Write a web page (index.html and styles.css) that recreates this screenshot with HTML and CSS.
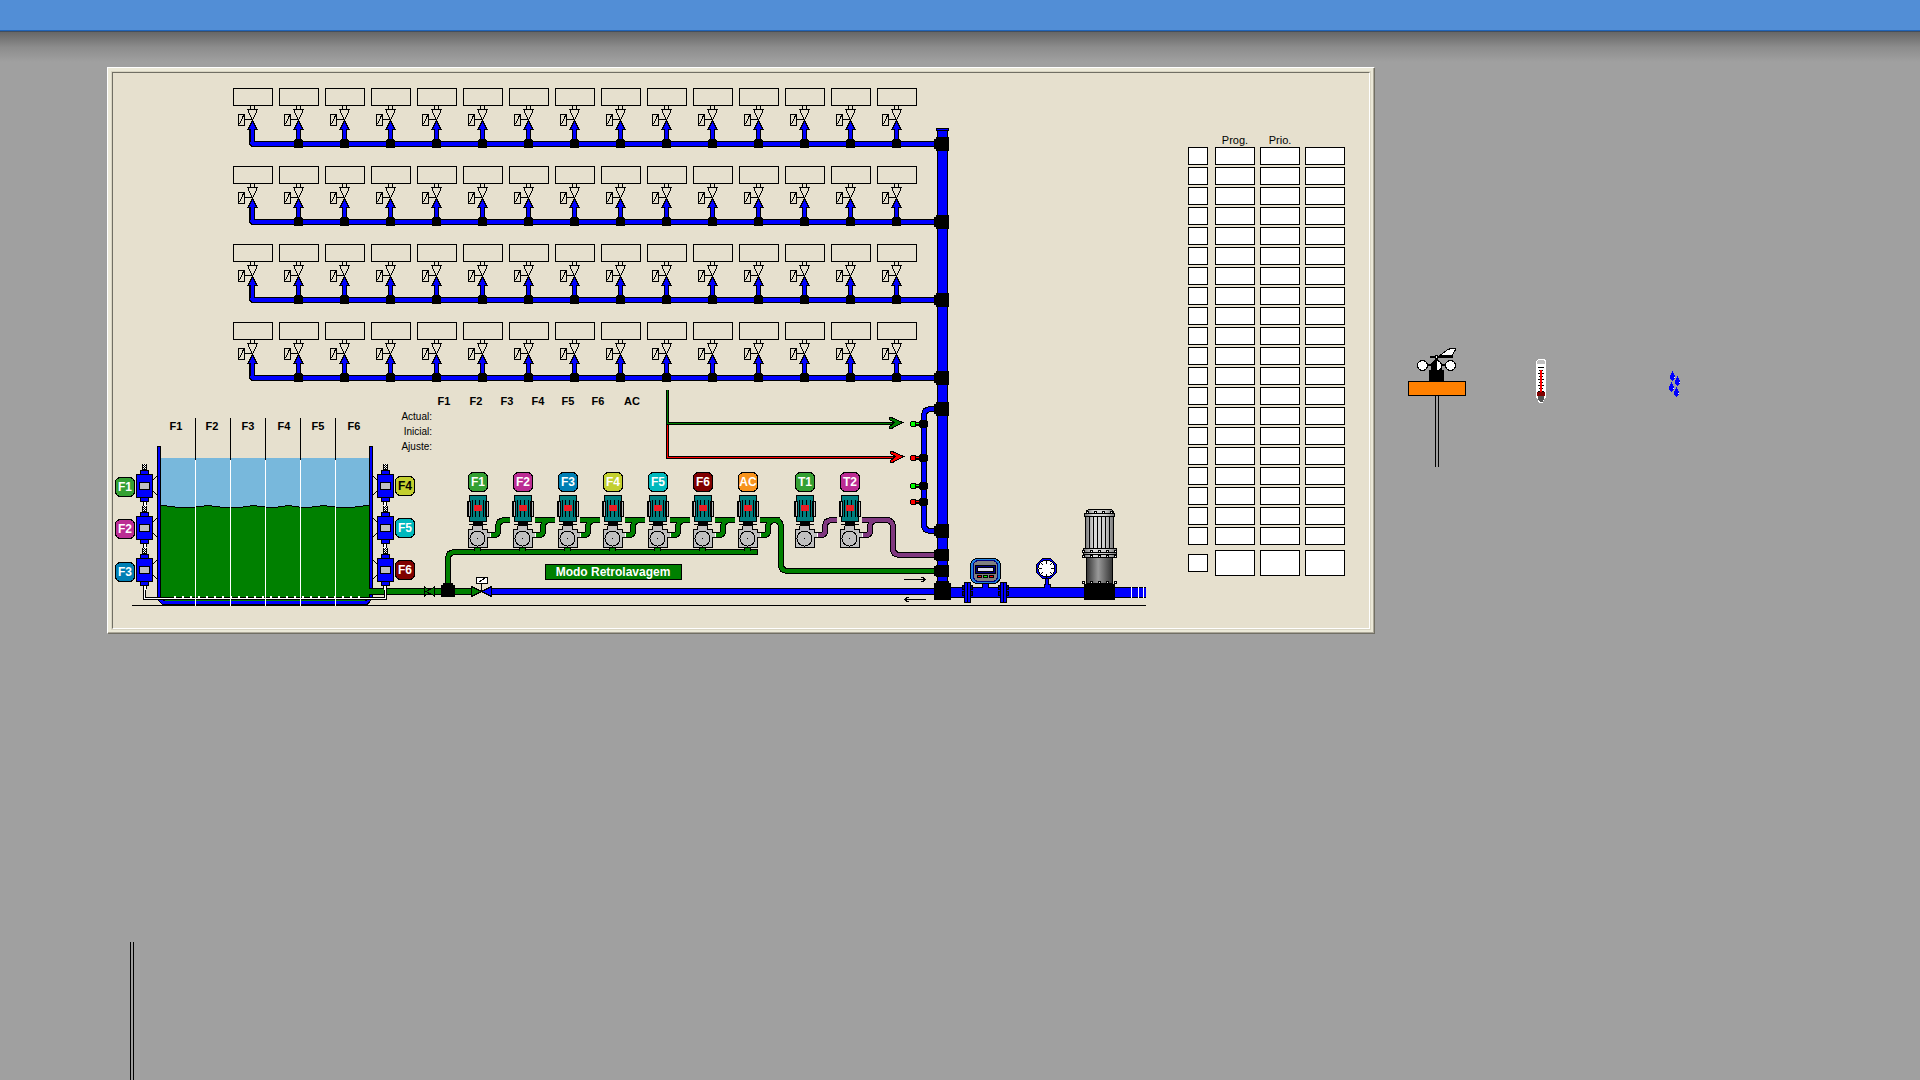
FILE: index.html
```html
<!DOCTYPE html>
<html lang="pt">
<head>
<meta charset="utf-8">
<title>Rega e fertilização</title>
<link rel="stylesheet" href="styles.css">
</head>
<body>
<header class="topbar"></header>
<main class="workspace">
  <section class="frame"><div class="frame-inner">
    <svg class="diagram" width="1040" height="555" viewBox="113 73 1040 555" role="img" aria-label="Esquema da instalação">
      <defs>
        <!-- sector box with its valve -->
        <g id="sector">
          <rect class="line" x="233.5" y="88.5" width="39" height="17"/>
          <path class="line" d="M250.500 106v3M254.500 106v3M247 109.500h11M248.500 110v2l4 8 4-8v-2M245 119.500h8M238.500 114.500h6v11h-6zM239.500 124.500l4-9"/>
          <path class="water-out" d="M252.500 120.500l-4.500 9h9z"/>
          <rect x="247" y="129" width="11" height="1"/>
          <rect x="250" y="130" width="5" height="12"/>
          <rect class="water" x="251" y="129" width="3" height="15"/>
        </g>
        <g id="sector-tee"><use href="#sector"/><path d="M249 139h7v1h1v8h-9v-8h1z"/></g>
        <path id="row-pipe" d="M252 130v13l1 1H935"/>
        <g id="sector-row">
          <use href="#row-pipe" class="p-black"/><use href="#row-pipe" class="p-water"/>
          <use href="#sector"/>
          <use href="#sector-tee" x="46"/><use href="#sector-tee" x="92"/><use href="#sector-tee" x="138"/>
          <use href="#sector-tee" x="184"/><use href="#sector-tee" x="230"/><use href="#sector-tee" x="276"/>
          <use href="#sector-tee" x="322"/><use href="#sector-tee" x="368"/><use href="#sector-tee" x="414"/>
          <use href="#sector-tee" x="460"/><use href="#sector-tee" x="506"/><use href="#sector-tee" x="552"/>
          <use href="#sector-tee" x="598"/><use href="#sector-tee" x="644"/>
        </g>
        <path id="main-tee" d="M936 137h13v14h-13v-2h-2v-10h2z"/>
        <g id="flow">
          <path class="line" d="M153 480l4-4M153 491l4 4"/>
          <rect x="142" y="464" width="5" height="6"/>
          <path class="paper" d="M143 464h1v1h-1zM145 464h1v1h-1zM144 465h1v1h-1zM143 466h1v1h-1zM145 466h1v1h-1zM144 467h1v1h-1zM143 468h1v1h-1zM145 468h1v1h-1z"/>
          <rect class="water-out" x="140.500" y="470.500" width="8" height="4"/>
          <rect class="water-out" x="140.500" y="497.500" width="8" height="4"/>
          <rect class="water-out" x="136.500" y="474.500" width="16" height="23"/>
          <rect class="grey-out" x="139.500" y="482.500" width="10" height="7"/>
          <rect x="143" y="502" width="4" height="3"/><rect class="paper" x="144" y="502" width="2" height="4"/>
        </g>
        <g id="pump">
          <rect class="teal-out" x="469.500" y="495.500" width="17" height="26"/>
          <path d="M472 500h1v17h-1zM475 500h1v5h-1zM479 500h1v5h-1zM483 500h1v17h-1zM475 511h1v6h-1zM479 511h1v6h-1z"/>
          <path d="M467 501h4v16h-4zM485 501h4v16h-4z"/>
          <path class="grey" d="M469 502h1v14h-1zM487 502h1v14h-1z"/>
          <rect class="lamp" x="474" y="505" width="8" height="6"/>
          <path d="M473 522h10v4h-10zM469 524h18v1h-18z"/>
          <rect x="472" y="526" width="11" height="4"/><rect class="grey" x="473" y="526" width="9" height="4"/>
          <rect class="grey" x="487" y="533" width="4" height="4"/>
          <path d="M487 532h4v1h-4zM487 537h4v1h-4z"/><path class="paper" d="M490 533h1v4h-1z"/>
          <rect class="grey-out" x="468.500" y="529.500" width="19" height="18"/>
          <rect class="grey" x="473" y="529" width="9" height="1"/><rect class="grey" x="486" y="533" width="3" height="4"/>
          <circle class="line" cx="477.500" cy="538.500" r="7.500"/>
          <rect x="477" y="538" width="1" height="1"/>
        </g>
        <path id="hose" d="M491 535h3q4 0 4-4v-4q0-7 7-7h5"/>
        <path id="link" d="M490 520h20"/>
        <g id="hose-green"><use href="#link" class="p-black"/><use href="#hose" class="p-black"/><use href="#link" class="p-green"/><use href="#hose" class="p-green"/></g>
        <g id="drain"><path d="M474 548h7v3h-7z"/><path class="green" d="M475 548h5v4h-5z"/></g>
        <rect id="badge" x=".5" y=".5" width="19" height="19" rx="5"/>
        <g id="tap"><path d="M911 421h5v1h3v4h-3v1h-5v-1h-1v-4h1z"/><path d="M920 420h7v1h1v6h-1v1h-7v-1h-1v-6h1z"/></g>
        <path id="dose-green" d="M774 520q7 0 7 7v37q0 7 7 7H934"/>
        <path id="dose-purple" d="M862 520h24q7 0 7 7v21q0 7 7 7h34"/>
        <path id="bypass" d="M936 409h-5q-7 0-7 7v108q0 7 7 7h5"/>
        <path id="collector" d="M448 586v-27q0-7 7-7H757"/>
        <path id="air" d="M144.500 502v96.500h241v-96.500"/>
        <linearGradient id="steel"><stop offset="0" stop-color="#777"/><stop offset=".3" stop-color="#ddd"/><stop offset=".7" stop-color="#ccc"/><stop offset="1" stop-color="#777"/></linearGradient>
        <linearGradient id="iron"><stop offset="0" stop-color="#333"/><stop offset=".45" stop-color="#999"/><stop offset="1" stop-color="#333"/></linearGradient>
      </defs>

      <!-- sectors -->
      <use href="#sector-row"/><use href="#sector-row" y="78"/><use href="#sector-row" y="156"/><use href="#sector-row" y="234"/>

      <!-- main pipe -->
      <rect x="937" y="129" width="11" height="456"/><rect class="water" x="938" y="130" width="9" height="455"/>
      <rect class="water-out" x="936.500" y="128.500" width="12" height="2"/>
      <use href="#bypass" class="p-black"/><use href="#bypass" class="p-water"/>
      <use href="#main-tee"/><use href="#main-tee" y="78"/><use href="#main-tee" y="156"/><use href="#main-tee" y="234"/>
      <use href="#main-tee" y="265"/><use href="#main-tee" y="387"/>

      <!-- pH / EC probes -->
      <use href="#tap"/><use href="#tap" y="34"/><use href="#tap" y="62"/><use href="#tap" y="78"/>
      <path class="lime" d="M911 422h4v4h-4zM916 423h3v1h-3zM911 484h4v4h-4zM916 485h3v1h-3z"/>
      <path class="red" d="M911 456h4v4h-4zM916 457h3v1h-3zM911 500h4v4h-4zM916 501h3v1h-3z"/>

      <path d="M666 390h3v32h226v3H669v31h226v3H666z"/>
      <path class="green" d="M667 390h1v33h228v1H667z"/>
      <path class="red" d="M667 425h1v32h229v1H667z"/>
      <path class="green-out" d="M889.500 417.500v2l5 3-5 4v2h2l11-6-11-5z"/>
      <path class="red-out" d="M890.500 451.500v2l5 3-5 4v2h2l11-6-11-5z"/>

      <!-- sand tank -->
      <rect x="157" y="446" width="4" height="150"/><rect x="369" y="446" width="4" height="150"/>
      <path d="M157 590v8l2 4 3 3h205l3-3 3-4v-8z"/>
      <path class="water" d="M158 447h2v151l4 3h202l4-3V447h2v151l-3 4-3 2H163l-3-2-2-4z"/>
      <rect class="sky" x="161" y="458" width="208" height="50"/>
      <path class="green" d="M161 506h6v1h8v1h21v-1h8v-1h8v1h8v1h23v-1h7v-1h7v1h8v1h13v-1h7v-1h7v1h7v1h13v-1h8v-1h7v1h8v1h20v-1h8v-1h6v91l-5 4H166l-5-4z"/>
      <path class="line" d="M161 505.500h6M167 506.500h8M175 507.500h21M196 506.500h8M204 505.500h8M212 506.500h8M220 507.500h23M243 506.500h7M250 505.500h7M257 506.500h8M265 507.500h13M278 506.500h7M285 505.500h7M292 506.500h7M299 507.500h13M312 506.500h8M320 505.500h7M327 506.500h8M335 507.500h20M355 506.500h8M363 505.500h6"/>
      <path d="M195 418h1v42h-1zM230 418h1v42h-1zM265 418h1v42h-1zM300 418h1v42h-1zM335 418h1v42h-1z"/>

      <!-- bottom line: tank outlet, check valve, back-flush valve -->
      <rect x="369" y="588" width="104" height="7"/><rect class="green" x="368" y="589" width="105" height="5"/>
      <path class="green-out" d="M424.500 587.500l9 4-9 4z"/><path class="green-out" d="M434.500 587.500l-9 4 9 4z"/><rect x="434" y="586" width="1" height="11"/><rect x="424" y="586" width="1" height="11"/>
      <path class="green-out" d="M471.500 586.500v10l10-5z"/>
      <rect x="491" y="588" width="445" height="7"/><rect class="water" x="490" y="589" width="446" height="5"/>
      <path class="water-out" d="M491.500 586.500v10l-10-5z"/>
      <rect x="481" y="583" width="1" height="8"/><rect class="paper-out" x="476.500" y="577.500" width="11" height="6"/><path class="line" d="M479 582l6-4"/>

      <use href="#collector" class="p-black"/><use href="#collector" class="p-green"/><rect x="757" y="549" width="1" height="6"/>
      <path d="M443 583h10v2h2v12h-14v-12h2z"/>

      <rect x="132" y="605" width="1014" height="1"/>
      <use href="#air" class="p-air-out"/><use href="#air" class="p-air"/>
      <path class="air-jets" d="M174 597H360"/>
      <path class="paper" d="M195 460h1v146h-1zM230 460h1v146h-1zM265 460h1v146h-1zM300 460h1v146h-1zM335 460h1v146h-1z"/>
      <use href="#flow"/><use href="#flow" y="42"/><use href="#flow" y="84"/>
      <g transform="translate(530 0) scale(-1 1)"><use href="#flow"/><use href="#flow" y="42"/><use href="#flow" y="84"/></g>

      <!-- dosing pumps -->
      <g class="p-black"><use href="#hose"/><use href="#dose-green"/><use href="#dose-purple"/></g>
      <g class="p-black"><use href="#hose" x="327"/><use href="#hose" x="372"/></g>
      <use href="#hose" class="p-green"/>
      <use href="#hose-green" x="45"/><use href="#hose-green" x="90"/><use href="#hose-green" x="135"/><use href="#hose-green" x="180"/><use href="#hose-green" x="225"/><use href="#hose-green" x="270"/>
      <use href="#dose-green" class="p-green"/>
      <g class="p-purple"><use href="#dose-purple"/><use href="#hose" x="327"/><use href="#hose" x="372"/></g>
      <use href="#drain"/><use href="#drain" x="45"/><use href="#drain" x="90"/><use href="#drain" x="135"/><use href="#drain" x="180"/><use href="#drain" x="225"/><use href="#drain" x="270"/>
      <use href="#pump"/><use href="#pump" x="45"/><use href="#pump" x="90"/><use href="#pump" x="135"/><use href="#pump" x="180"/><use href="#pump" x="225"/><use href="#pump" x="270"/>
      <use href="#pump" x="327"/><use href="#pump" x="372"/>
      <path d="M936 549h13v12h-13v-1h-2v-10h2zM936 565h13v12h-13v-1h-2v-10h2z"/>

      <!-- pump line -->
      <rect x="948" y="587" width="198" height="11"/><rect class="water" x="948" y="588" width="198" height="9"/>
      <path class="paper" d="M1131 587h1v11h-1zM1138 587h1v11h-1zM1143 587h1v11h-1z"/>
      <path d="M936 581h13v2h2v17h-17v-17h2z"/>
      <path class="line" d="M904 579.500h21M921 577.500h2l2 2-2 2h-2M905 599.500h21M909 597.500h-2l-2 2 2 2h2"/>

      <!-- flow meter -->
      <rect x="982" y="582" width="7" height="6"/><rect class="water" x="983" y="582" width="5" height="7"/>
      <path class="navy-out" d="M962.500 585.500h10v4h-10zM962.500 595.500h10v-4h-10zM998.500 585.500h10v4h-10zM998.500 595.500h10v-4h-10z"/>
      <path class="water-out" d="M964.500 582.500h6v20h-6zM1000.500 582.500h6v20h-6z"/><path d="M967 583h1v19h-1zM1003 583h1v19h-1z"/>
      <rect class="meter" x="970.500" y="558.500" width="30" height="25" rx="7"/>
      <rect class="meter-face" x="973.500" y="560.500" width="24" height="21" rx="5"/>
      <rect x="975" y="565" width="21" height="9"/><rect class="navy" x="976" y="566" width="19" height="7"/><rect class="screen" x="977.500" y="567.500" width="16" height="4"/>
      <path d="M977 575h5v3h-5zM983 575h5v3h-5zM989 575h5v3h-5z"/>
      <path class="red" d="M978 576h3v1h-3zM990 576h3v1h-3z"/><path class="lime" d="M984 576h3v1h-3z"/>

      <!-- pressure gauge -->
      <path class="water-out" d="M1045.500 578.500h3v6h2v3h-6v-3h1z"/><rect class="water" x="1045" y="587" width="5" height="2"/>
      <path class="water-out" d="M1042.500 558.500h8l6 6v8l-6 6h-8l-6-6v-8z"/>
      <circle class="paper-out" cx="1046.500" cy="568.500" r="8.500"/>
      <path class="line" d="M1046.500 560v4M1046.500 574v3M1039 568.500h3M1051 568.500h3M1041 563l2 2M1052 563l-2 2M1041 574l2-2M1052 574l-2-2"/>

      <!-- main pump -->
      <rect class="iron" x="1086.500" y="557.500" width="26" height="26"/>
      <rect class="steel" x="1085.500" y="516.500" width="28" height="33"/>
      <path d="M1089 517h1v31h-1zM1093 517h1v31h-1zM1097 517h1v31h-1zM1101 517h1v31h-1zM1105 517h1v31h-1zM1109 517h1v31h-1z"/>
      <path class="steel" d="M1086.500 513v-2l2-1.500h23l1.500 1.500v2z"/>
      <rect class="steel" x="1084.500" y="513.500" width="30" height="3"/>
      <rect class="steel" x="1083.500" y="548.500" width="33" height="9"/><path d="M1083 552h34v1h-34zM1083 554h34v1h-34z"/>
      <path class="bolts" d="M1082 551.500h35M1082 556.500h35M1082 582.500h35M1086 512.500h27"/>
      <path class="bolt-heads" d="M1083 551.500h34M1083 556.500h34M1083 582.500h34M1087 512.500h26"/>
      <rect x="1084" y="584" width="31" height="16"/>

      <!-- badges -->
      <g class="badge">
        <use href="#badge" class="c1" x="115" y="477"/><use href="#badge" class="c2" x="115" y="519"/><use href="#badge" class="c3" x="115" y="562"/>
        <use href="#badge" class="c4" x="395" y="476"/><use href="#badge" class="c5" x="395" y="518"/><use href="#badge" class="c6" x="395" y="560"/>
        <use href="#badge" class="c1" x="468" y="472"/><use href="#badge" class="c2" x="513" y="472"/><use href="#badge" class="c3" x="558" y="472"/>
        <use href="#badge" class="c4" x="603" y="472"/><use href="#badge" class="c5" x="648" y="472"/><use href="#badge" class="c6" x="693" y="472"/>
        <use href="#badge" class="c7" x="738" y="472"/><use href="#badge" class="c1" x="795" y="472"/><use href="#badge" class="c2" x="840" y="472"/>
      </g>
      <g class="badge-text">
        <text x="125" y="491">F1</text><text x="125" y="533">F2</text><text x="125" y="576">F3</text>
        <text x="405" y="490" class="dark">F4</text><text x="405" y="532">F5</text><text x="405" y="574">F6</text>
        <text x="478" y="486">F1</text><text x="523" y="486">F2</text><text x="568" y="486">F3</text>
        <text x="613" y="486">F4</text><text x="658" y="486">F5</text><text x="703" y="486">F6</text>
        <text x="748" y="486">AC</text><text x="805" y="486">T1</text><text x="850" y="486">T2</text>
      </g>
      <g class="heading">
        <text x="176" y="430">F1</text><text x="212" y="430">F2</text><text x="248" y="430">F3</text><text x="284" y="430">F4</text><text x="318" y="430">F5</text><text x="354" y="430">F6</text>
        <text x="444" y="405">F1</text><text x="476" y="405">F2</text><text x="507" y="405">F3</text><text x="538" y="405">F4</text><text x="568" y="405">F5</text><text x="598" y="405">F6</text><text x="632" y="405">AC</text>
      </g>
      <g class="caption"><text x="432" y="420">Actual:</text><text x="432" y="435">Inicial:</text><text x="432" y="450">Ajuste:</text></g>
      <rect class="green-out" x="545.500" y="564.500" width="136" height="15"/>
      <text class="mode" x="613" y="576">Modo Retrolavagem</text>
    </svg>

    <table class="programs">
      <thead><tr><td></td><th scope="col">Prog.</th><th scope="col">Prio.</th><td></td></tr></thead>
      <tbody>
        <tr><td></td><td></td><td></td><td></td></tr>
        <tr><td></td><td></td><td></td><td></td></tr>
        <tr><td></td><td></td><td></td><td></td></tr>
        <tr><td></td><td></td><td></td><td></td></tr>
        <tr><td></td><td></td><td></td><td></td></tr>
        <tr><td></td><td></td><td></td><td></td></tr>
        <tr><td></td><td></td><td></td><td></td></tr>
        <tr><td></td><td></td><td></td><td></td></tr>
        <tr><td></td><td></td><td></td><td></td></tr>
        <tr><td></td><td></td><td></td><td></td></tr>
        <tr><td></td><td></td><td></td><td></td></tr>
        <tr><td></td><td></td><td></td><td></td></tr>
        <tr><td></td><td></td><td></td><td></td></tr>
        <tr><td></td><td></td><td></td><td></td></tr>
        <tr><td></td><td></td><td></td><td></td></tr>
        <tr><td></td><td></td><td></td><td></td></tr>
        <tr><td></td><td></td><td></td><td></td></tr>
        <tr><td></td><td></td><td></td><td></td></tr>
        <tr><td></td><td></td><td></td><td></td></tr>
        <tr><td></td><td></td><td></td><td></td></tr>
      </tbody>
      <tfoot><tr><td></td><td></td><td></td><td></td></tr></tfoot>
    </table>
  </div></section>

  <aside class="weather">
    <svg class="wind" width="58" height="120" viewBox="0 0 58 120" role="img" aria-label="Vento">
      <path d="M27 49h1v71h-1zM30 49h1v71h-1z"/>
      <rect class="orange-out" x=".5" y="34.500" width="57" height="14"/>
      <path d="M21 34V23h2v-6l3-4h5l3 4v6h2v11zM22 9h23v2H22zM19 17h5v2h-5zM34 17h5v2h-5zM27 8h3v9h-3z"/>
      <path class="paper" d="M29 14q4 1 4 5t-4 4z"/><rect class="paper" x="28" y="9" width="1" height="2"/>
      <path class="paper-out" d="M32 8.500l8-6 3-1h4v2l-3 5z"/>
      <circle class="paper-out" cx="14.500" cy="18.500" r="5"/><circle class="paper-out" cx="42.500" cy="18.500" r="5"/>
    </svg>
    <svg class="temperature" width="10" height="44" viewBox="0 0 10 44" role="img" aria-label="Temperatura">
      <path class="paper" d="M2 0h6l2 2v36l-2 3-1 3H3l-1-3-2-3V2z"/>
      <path class="grey" d="M2 1h6l1 2v2H1V3z"/>
      <path d="M2 8h6v1H2zM2 14h6v1H2zM2 20h6v1H2zM2 26h6v1H2zM2 32h6v1H2zM3 11h4v1H3zM3 17h4v1H3zM3 23h4v1H3zM3 29h4v1H3z"/>
      <rect class="red" x="4" y="11" width="2" height="23"/><rect class="c6" x="1" y="33" width="8" height="4"/>
      <path class="slate" d="M2 37h6v3l-1 2-1 1H4l-1-1-1-2z"/>
    </svg>
    <svg class="rain" width="12" height="26" viewBox="0 0 12 26" role="img" aria-label="Chuva">
      <defs><path id="drop" d="M3 0h1v2h1v2h1v4h-1v1h-1v1H3V9H2V8H1V4h1V2h1z"/></defs>
      <g class="water"><use href="#drop"/><use href="#drop" x="5" y="5"/><use href="#drop" x="-1" y="11"/><use href="#drop" x="4" y="16"/></g>
      <path class="paper" d="M5 6h1v1H5zM10 11h1v1h-1zM4 17h1v1H4zM9 22h1v1H9z"/>
    </svg>
  </aside>
</main>
<div class="mast"></div>
</body>
</html>
```
FILE: styles.css
```css
* { box-sizing: border-box; }

body {
  margin: 0;
  min-height: 100vh;
  display: flex;
  flex-direction: column;
  background: #a0a0a0 linear-gradient(#666, #8c8c8c 50%, #a0a0a0) 0 32px / 100% 30px no-repeat;
  font-family: "Liberation Sans", Arial, sans-serif;
  color: #000;
}

.topbar {
  height: 32px;
  background: #528ed6;
  border-bottom: 1px solid #404e60;
  box-shadow: inset 0 -1px #2064b8;
}

.workspace {
  display: flex;
  align-items: flex-start;
  padding: 35px 0 0 107px;
}

/* raised frame around the plant diagram */
.frame {
  flex: none;
  padding: 3px;
  border: 1px solid;
  border-color: #fff #716f64 #716f64 #fff;
  box-shadow: inset -1px -1px #aca899;
  background: #ece9d8;
}

.frame-inner {
  display: flex;
  align-items: flex-start;
  gap: 35px;
  padding-right: 24px;
  border: 2px solid;
  border-color: #716f64 #fff #fff #716f64;
  outline: 1px solid #d8d4c2;
  outline-offset: -1px;
  background: #e6e0ce;
}

.diagram { display: block; flex: none; shape-rendering: crispEdges; }
.weather svg { display: block; flex: none; shape-rendering: crispEdges; }

.line { fill: none; stroke: #000; }
.water { fill: #00f; }
.water-out { fill: #00f; stroke: #000; }
.green { fill: #008000; }
.green-out { fill: #008000; stroke: #000; }
.red { fill: #f00; }
.red-out { fill: #f00; stroke: #000; }
.lime { fill: #0f0; }
.paper { fill: #fff; }
.paper-out { fill: #fff; stroke: #000; }
.grey { fill: #c0c0c0; }
.grey-out { fill: #c0c0c0; stroke: #000; }
.teal-out { fill: #008080; stroke: #000; }
.navy { fill: #000080; }
.navy-out { fill: #000080; stroke: #000; }
.orange-out { fill: #ff8000; stroke: #000; }
.lamp { fill: #ed1c24; }
.sky { fill: #78b8dc; }
.slate { fill: #555; }
.screen { fill: #dcdcec; stroke: #000; }
.meter { fill: #1e80e0; stroke: #000; }
.meter-face { fill: #808080; stroke: #000080; }
.steel { fill: url(#steel); stroke: #000; }
.iron { fill: url(#iron); stroke: #000; }
.bolts { fill: none; stroke: #000; stroke-width: 3; stroke-dasharray: 3 5; }
.bolt-heads { fill: none; stroke: #fff; stroke-width: 1; stroke-dasharray: 1 7; }

.p-black, .p-water, .p-green, .p-purple, .p-air, .p-air-out { fill: none; }
.p-black { stroke: #000; stroke-width: 6; }
.p-water { stroke: #00f; stroke-width: 4; }
.p-green { stroke: #008000; stroke-width: 4; }
.p-purple { stroke: #803880; stroke-width: 4; }
.p-air-out { stroke: #000; stroke-width: 3; }
.p-air { stroke: #fff; stroke-width: 1; }
.air-jets { fill: none; stroke: #fff; stroke-width: 2; stroke-dasharray: 2 6; }

.badge { stroke: #000; }
.c1 { fill: #34a032; }
.c2 { fill: #bb2d93; }
.c3 { fill: #007fb4; }
.c4 { fill: #c3cf2f; }
.c5 { fill: #00b9bd; }
.c6 { fill: #800000; }
.c7 { fill: #f7931e; }

.badge-text, .heading, .mode { font-weight: bold; text-anchor: middle; }
.badge-text, .mode { font-size: 12px; fill: #fff; }
.badge-text .dark { fill: #000; }
.heading { font-size: 11px; }
.caption { font-size: 10px; text-anchor: end; }

.programs {
  display: flex;
  flex-direction: column;
  gap: 1px;
  padding-top: 61px;
}
.programs tbody { display: flex; flex-direction: column; gap: 2px; }
.programs tfoot { display: block; padding-top: 4px; }
.programs thead { display: block; }
.programs tr { display: flex; gap: 5px; align-items: center; }
.programs td, .programs th {
  width: 40px;
  height: 18px;
  padding: 0;
  border: 1px solid #000;
  background: #fff;
}
.programs td:first-child { width: 20px; margin-right: 2px; }
.programs tfoot td { height: 26px; }
.programs tfoot td:first-child { height: 18px; }
.programs thead td, .programs thead th {
  height: 12px;
  border: 0;
  background: none;
  font-size: 11px;
  line-height: 12px;
  font-weight: normal;
}

.weather { display: flex; align-items: flex-start; padding: 280px 0 0 33px; }
.temperature { margin: 12px 123px 0 70px; }
.rain { margin-top: 24px; }

/* double-line mast below the panel */
.mast {
  flex: 1;
  width: 4px;
  margin: 308px 0 0 130px;
  border: solid #000;
  border-width: 0 1px;
}
```
